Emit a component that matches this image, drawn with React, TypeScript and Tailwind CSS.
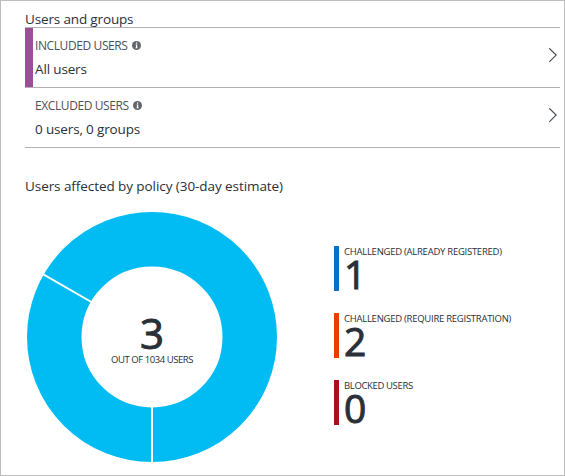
import React from "react";

type RowProps = { label: string; value: string; active?: boolean };

function InfoIcon() {
  return (
    <svg width="9" height="9" viewBox="0 0 9 9" className="-mt-px block shrink-0">
      <circle cx="4.5" cy="4.5" r="4.5" fill="#63666a" />
      <path d="M4 1.5h1.2v1.2H4zM3.6 3.6h1.6v3h.5v.7H3.4v-.7H4V4.3h-.4z" fill="#fff" />
    </svg>
  );
}

function Row({ label, value, active }: RowProps) {
  return (
    <div className="flex h-[60px] border-b border-[#b2b2b2]">
      <div className={active ? "w-2 bg-[#9b4f96]" : "w-2"} />
      <div className="flex flex-1 flex-col pl-[2px] pt-[9px]">
        <div className="flex h-[18px] items-center gap-1">
          <span className="whitespace-nowrap text-[12px] leading-[18px] tracking-[-0.4px] text-[#4c5057]">{label}</span>
          <InfoIcon />
        </div>
        <div className="mt-1 whitespace-nowrap text-[13.5px] leading-[20px] tracking-[-0.15px]">{value}</div>
      </div>
      <div className="flex w-3 items-start pt-5">
        <svg width="9" height="15" viewBox="0 0 9 15" className="block">
          <path d="M1.3 .3l6.8 6.8-6.8 6.8" fill="none" stroke="#464a52" strokeWidth="1.2" />
        </svg>
      </div>
    </div>
  );
}

type StatProps = { label: string; value: string; color: string; labelClass: string };

function Stat({ label, value, color, labelClass }: StatProps) {
  return (
    <div className="flex h-[45px]">
      <div className={`w-[5px] ${color}`} />
      <div className="pl-[5px]">
        <div className={`h-3 whitespace-nowrap text-[9.5px] leading-[12px] ${labelClass}`}>{label}</div>
        <div className="h-[33px] text-[39px] leading-[32px] [-webkit-text-stroke:1px_#2b3038]">{value}</div>
      </div>
    </div>
  );
}

export default function App() {
  return (
    <main className="h-[476px] w-[565px] overflow-hidden border border-[#bdbdbd] bg-white pl-6 pr-1 font-['Open_Sans','Noto_Sans',sans-serif] text-[#2b3038]">
      <h1 className="h-[26px] whitespace-nowrap pt-2 text-[13.5px] leading-[20px] tracking-[-0.15px]">Users and groups</h1>
      <section className="border-t border-[#b2b2b2]">
        <Row active label="INCLUDED USERS" value="All users" />
        <Row label="EXCLUDED USERS" value="0 users, 0 groups" />
      </section>
      <h2 className="mt-7 h-5 whitespace-nowrap text-[13.5px] leading-[20px] tracking-[-0.07px]">
        Users affected by policy (30-day estimate)
      </h2>
      <section className="flex pl-[2px] pt-4">
        <div className="grid h-[250px] w-[250px] shrink-0">
          <svg width="250" height="250" viewBox="0 0 250 250" className="col-start-1 row-start-1">
            <circle cx="125" cy="125" r="97.75" fill="none" stroke="#00bcf2" strokeWidth="54.5" />
            <path d="M125 190v60M68.7 92.5L12 59.8" stroke="#fff" strokeWidth="2" />
          </svg>
          <div className="col-start-1 row-start-1 flex flex-col items-center pt-[102px]">
            <div className="h-10 text-[42px] leading-[37px] [-webkit-text-stroke:1px_#2b3038]">3</div>
            <div className="whitespace-nowrap text-[9.5px] leading-[12px] tracking-[-0.45px]">OUT OF 1034 USERS</div>
          </div>
        </div>
        <div className="ml-[57px] flex flex-col gap-[22px] pt-[34px]">
          <Stat label="CHALLENGED (ALREADY REGISTERED)" value="1" color="bg-[#0072c6]" labelClass="tracking-[-0.26px]" />
          <Stat label="CHALLENGED (REQUIRE REGISTRATION)" value="2" color="bg-[#eb3c00]" labelClass="tracking-[-0.26px]" />
          <Stat label="BLOCKED USERS" value="0" color="bg-[#ac0f1b]" labelClass="tracking-[-0.36px]" />
        </div>
      </section>
    </main>
  );
}
